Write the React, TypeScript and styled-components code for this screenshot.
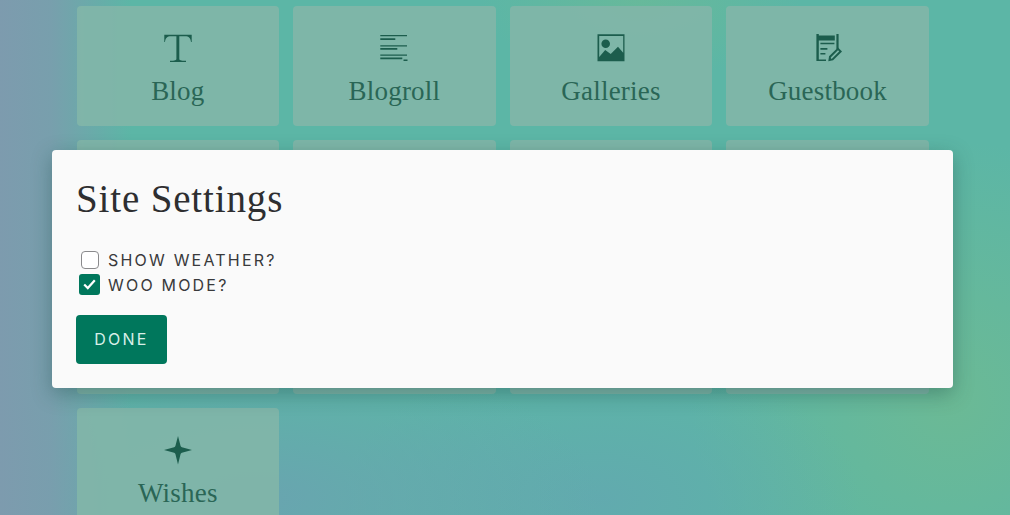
import React from 'react';
import styled, { createGlobalStyle } from 'styled-components';

const GlobalStyle = createGlobalStyle`
  html, body {
    margin: 0;
    height: 100%;
    overflow: hidden;
  }
  body {
    font-family: "Liberation Serif", serif;
  }
`;

const Page = styled.div`
  position: relative;
  width: 1010px;
  height: 515px;
  overflow: hidden;
  background:
    linear-gradient(90deg, #7d9bae 0%, rgba(125, 155, 174, 0.85) 5%, rgba(125, 155, 174, 0) 13%),
    radial-gradient(ellipse 340px 150px at 260px 500px, rgba(108, 160, 178, 0.8) 0%, rgba(108, 160, 178, 0) 100%),
    radial-gradient(ellipse 260px 150px at 600px 500px, rgba(100, 165, 178, 0.7) 0%, rgba(100, 165, 178, 0) 100%),
    radial-gradient(ellipse 260px 260px at 950px 400px, rgba(110, 186, 146, 0.85) 0%, rgba(110, 186, 146, 0) 100%),
    radial-gradient(ellipse 160px 80px at 640px 0px, rgba(108, 186, 150, 0.7) 0%, rgba(108, 186, 150, 0) 100%),
    #5cb6a6;
`;

const Grid = styled.div`
  display: grid;
  grid-template-columns: repeat(4, 202.6px);
  grid-auto-rows: 119.5px;
  column-gap: 14px;
  row-gap: 14.5px;
  padding: 6px 0 0 76.5px;
`;

const Card = styled.a`
  display: flex;
  flex-direction: column;
  align-items: center;
  padding-top: 28px;
  box-sizing: border-box;
  border-radius: 4px;
  background: rgba(130, 182, 168, 0.9);
  color: #1c5d4d;
`;

const IconSlot = styled.svg`
  display: block;
  width: 28px;
  height: 28px;
  fill: currentColor;
  overflow: visible;
`;

const CardLabel = styled.span`
  margin-top: 11px;
  font-size: 27px;
  line-height: 36px;
  letter-spacing: 0.2px;
  color: #2a6656;
`;

const Overlay = styled.div`
  position: absolute;
  top: 150px;
  left: 52px;
`;

const Modal = styled.div`
  box-sizing: border-box;
  width: 901px;
  height: 238px;
  padding: 26px 25px 0 24px;
  border-radius: 4px;
  background: #fafafa;
  box-shadow: 0 6px 20px rgba(20, 60, 60, 0.35);
`;

const Heading = styled.h2`
  margin: 0 0 25px;
  font-size: 39px;
  line-height: 46px;
  font-weight: 400;
  letter-spacing: 0.85px;
  color: #2e2e30;
`;

const Options = styled.div`
  display: flex;
  flex-direction: column;
`;

const OptionRow = styled.label`
  display: flex;
  align-items: center;
  height: 25px;
  font-family: Inter, "Liberation Sans", sans-serif;
  font-size: 16px;
  letter-spacing: 2.2px;
  color: #39393b;
`;

const BoxSlot = styled.span`
  display: flex;
  align-items: center;
  justify-content: center;
  width: 27px;
  margin-right: 5px;
  flex: none;
`;

const EmptyBox = styled.span`
  box-sizing: border-box;
  width: 18px;
  height: 18px;
  border: 1px solid #8a8a8c;
  border-radius: 4px;
  background: #fff;
`;

const CheckedBox = styled.span`
  display: flex;
  align-items: center;
  justify-content: center;
  width: 21px;
  height: 21px;
  border-radius: 3px;
  background: #00775c;
  color: #fff;
`;

const DoneButton = styled.button`
  display: block;
  margin-top: 18px;
  padding: 0 0 2px;
  width: 91px;
  height: 49px;
  border: 0;
  border-radius: 4px;
  background: #00775c;
  color: #d8efe8;
  font-family: Inter, "Liberation Sans", sans-serif;
  font-size: 16px;
  letter-spacing: 2.2px;
`;

const BlogIcon = () => (
  <IconSlot viewBox="0 0 28 28">
    <path d="M.3.7H27.700V8H27C26.600 4 25 2.200 21 2.200H15.300V25C15.300 26 16.500 26.800 22 26.800V28H6V26.800C11 26.800 12.400 26 12.400 25V2.200H7C3 2.200 1.400 4 1 8H.3Z" />
  </IconSlot>
);

const BlogrollIcon = () => (
  <IconSlot viewBox="0 0 28 28">
    <path d="M.3 1h26.700v1.200H.3zM.3 4.300h15v1.600H.3zM.3 11.200h26.700v1.200H.3zM.3 14.100h17v1.600H.3zM.3 20.500h26.700v1.200H.3zM.3 23.600h22v1.600H.3zM23.500 25.500h4V27h-4z" />
  </IconSlot>
);

const GalleryIcon = () => (
  <IconSlot viewBox="0 0 28 28">
    <path
      fillRule="evenodd"
      d="M.5.3h27v27H.5zM2.200 2v21l6-7 5.500 4 7.300-7.300 5.200 6V2zM8.700 5.400a4.300 4.300 0 1 1 0 8.600 4.300 4.300 0 0 1 0-8.600z"
    />
  </IconSlot>
);

const GuestbookIcon = () => (
  <IconSlot viewBox="0 0 28 28">
    <path d="M2.400 0h2.400v1.500h16V6.500h-16v19h7.200V27H2.400zM22.400 0h2.200v15h-2.200zM6.400 8.800h14v1.500h-14zM6.400 14h7v1.700h-7zM6.400 19h5v1.600h-5z" />
    <path d="M15.500 26l.5-3.200 8-8 2.600 2.600-8 8z" fill="none" stroke="currentColor" strokeWidth="2" />
  </IconSlot>
);

const WishesIcon = () => (
  <IconSlot viewBox="0 0 28 28">
    <path d="M14 0l2.600 10q.3 1 1.300 1.300L28 14l-10.100 2.700q-1 .3-1.300 1.300L14 28.500 11.400 18q-.3-1-1.300-1.300L0 14l10.100-2.700q1-.3 1.300-1.300z" />
  </IconSlot>
);

const CheckMark = () => (
  <svg width="13" height="11" viewBox="0 0 13 11" fill="none" stroke="currentColor" strokeWidth="2.2">
    <path d="M1.200 5.500l3.600 3.600 7-7.800" />
  </svg>
);

const topCards = [
  { label: 'Blog', icon: <BlogIcon /> },
  { label: 'Blogroll', icon: <BlogrollIcon /> },
  { label: 'Galleries', icon: <GalleryIcon /> },
  { label: 'Guestbook', icon: <GuestbookIcon /> },
];

const App = () => {
  return (
    <Page>
      <GlobalStyle />
      <Grid>
        {topCards.map((c) => (
          <Card key={c.label}>
            {c.icon}
            <CardLabel>{c.label}</CardLabel>
          </Card>
        ))}
        <Card />
        <Card />
        <Card />
        <Card />
        <Card />
        <Card />
        <Card />
        <Card />
        <Card>
          <WishesIcon />
          <CardLabel>Wishes</CardLabel>
        </Card>
      </Grid>
      <Overlay>
        <Modal>
          <Heading>Site Settings</Heading>
          <Options>
            <OptionRow>
              <BoxSlot><EmptyBox /></BoxSlot>
              SHOW WEATHER?
            </OptionRow>
            <OptionRow>
              <BoxSlot><CheckedBox><CheckMark /></CheckedBox></BoxSlot>
              WOO MODE?
            </OptionRow>
          </Options>
          <DoneButton>DONE</DoneButton>
        </Modal>
      </Overlay>
    </Page>
  );
};

export default App;
